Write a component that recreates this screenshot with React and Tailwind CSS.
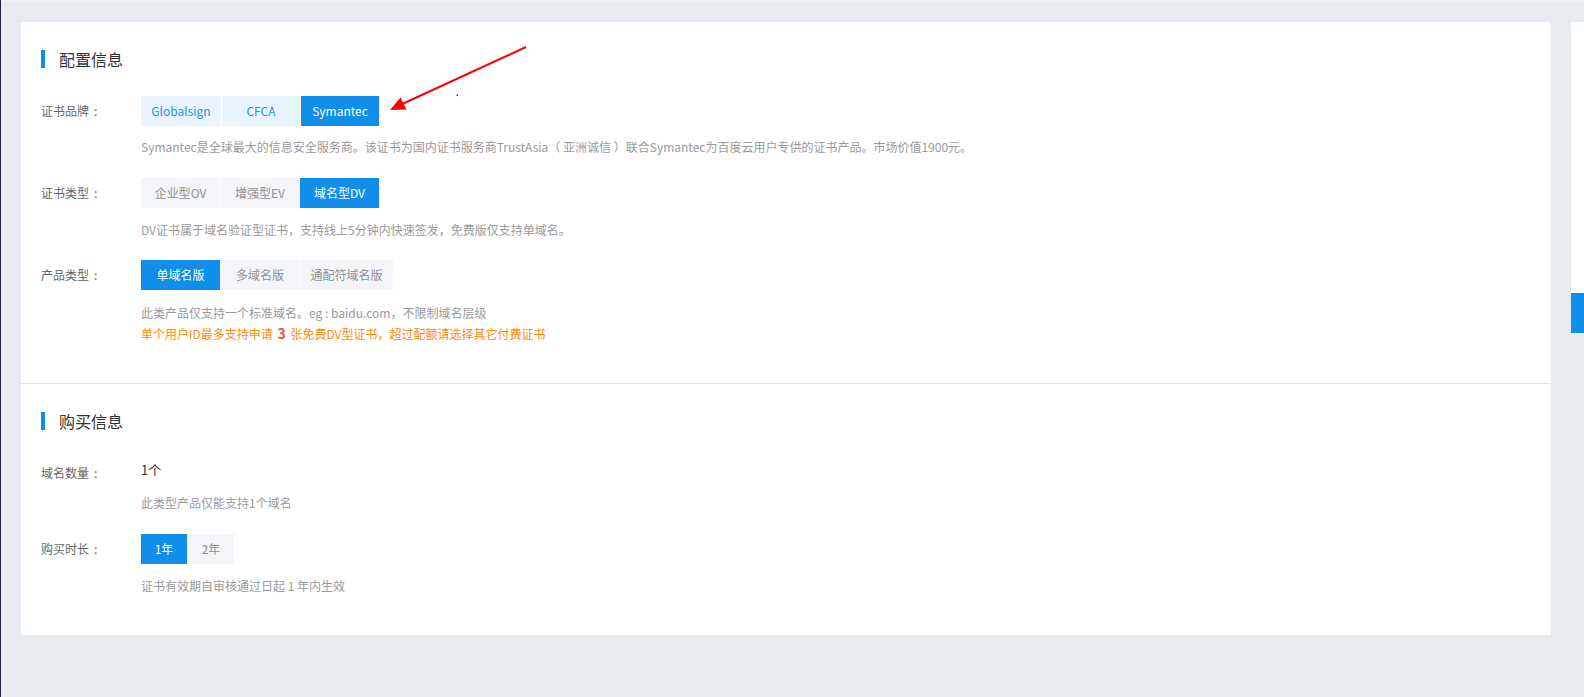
import React from "react";

function Btn({ children, active, tone = "gray", w }) {
  const base = "h-[30px] flex items-center justify-center text-[12px] shrink-0";
  let cls;
  if (active) cls = "bg-[#108ee9] text-white";
  else if (tone === "blue") cls = "bg-[#e9f5fe] text-[#2b8ee6]";
  else cls = "bg-[#f4f5f8] text-[#8f8f8f]";
  return (
    <div className={`${base} ${cls}`} style={{ width: w }}>
      {children}
    </div>
  );
}

function Heading({ children }) {
  return (
    <div className="flex items-center h-[18px]">
      <div className="w-[4px] h-[18px] bg-[#108ee9]" />
      <div className="ml-[14px] text-[16px] leading-[18px] text-[#333]">{children}</div>
    </div>
  );
}

function Label({ children }) {
  return (
    <div className="w-[100px] shrink-0 h-[30px] leading-[30px] text-[12px] text-[#666]">
      {children}
      <span className="ml-[5px]">:</span>
    </div>
  );
}

export default function App() {
  return (
    <div className="relative w-[1584px] h-[697px] bg-[#e7eaef] border-l border-[#1b2545] font-['Noto_Sans_CJK_SC',sans-serif] overflow-hidden">
      <div className="h-[2px] bg-[#eef0f3]" />
      <div className="flex pt-[20px] pl-[20px]">
        <div className="w-[1530px] h-[613px] bg-white">
          {/* Section 1 */}
          <div className="h-[362px] pt-[28px] pl-[20px] border-b border-[#e2e2e2]">
            <Heading>配置信息</Heading>
            <div className="mt-[28px] flex">
              <Label>证书品牌</Label>
              <div>
                <div className="flex gap-[1px]">
                  <Btn tone="blue" w={80}>Globalsign</Btn>
                  <Btn tone="blue" w={78}>CFCA</Btn>
                  <Btn active w={78}>Symantec</Btn>
                </div>
                <div className="mt-[11px] leading-[20px] text-[12px] text-[#9a9a9a]">
                  Symantec是全球最大的信息安全服务商。该证书为国内证书服务商TrustAsia（ 亚洲诚信 ）联合Symantec为百度云用户专供的证书产品。市场价值1900元。
                </div>
              </div>
            </div>
            <div className="mt-[21px] flex">
              <Label>证书类型</Label>
              <div>
                <div className="flex gap-[1px]">
                  <Btn w={79}>企业型OV</Btn>
                  <Btn w={78}>增强型EV</Btn>
                  <Btn active w={79}>域名型DV</Btn>
                </div>
                <div className="mt-[12px] leading-[20px] text-[12px] text-[#9a9a9a]">
                  DV证书属于域名验证型证书，支持线上5分钟内快速签发，免费版仅支持单域名。
                </div>
              </div>
            </div>
            <div className="mt-[20px] flex">
              <Label>产品类型</Label>
              <div>
                <div className="flex gap-[1px]">
                  <Btn active w={79}>单域名版</Btn>
                  <Btn w={78}>多域名版</Btn>
                  <Btn w={93}>通配符域名版</Btn>
                </div>
                <div className="mt-[12px] leading-[21px] text-[12px] text-[#9a9a9a]">
                  此类产品仅支持一个标准域名。eg : baidu.com，不限制域名层级
                </div>
                <div className="leading-[21px] text-[12px] text-[#ff8a0d]">
                  单个用户ID最多支持申请 <span className="mx-[2px] text-[#f2495c] font-bold text-[14px]">3</span> 张免费DV型证书，超过配额请选择其它付费证书
                </div>
              </div>
            </div>
          </div>
          {/* Section 2 */}
          <div className="pt-[28px] pl-[20px]">
            <Heading>购买信息</Heading>
            <div className="mt-[28px] flex">
              <Label>域名数量</Label>
              <div>
                <div className="leading-[24px] text-[13px] text-[#333]">1个</div>
                <div className="mt-[11px] leading-[20px] text-[12px] text-[#9a9a9a]">此类型产品仅能支持1个域名</div>
              </div>
            </div>
            <div className="mt-[21px] flex">
              <Label>购买时长</Label>
              <div>
                <div className="flex gap-[1px]">
                  <Btn active w={46}>1年</Btn>
                  <Btn w={46}>2年</Btn>
                </div>
                <div className="mt-[12px] leading-[20px] text-[12px] text-[#9a9a9a]">证书有效期自审核通过日起 1 年内生效</div>
              </div>
            </div>
          </div>
        </div>
        <div className="ml-[20px] w-[13px] flex flex-col">
          <div className="h-[271px] bg-white" />
          <div className="h-[40px] bg-[#108ee9]" />
        </div>
      </div>
      {/* annotation arrow */}
      <svg className="absolute left-0 top-0 pointer-events-none" width="1584" height="697">
        <line x1="525" y1="47" x2="399" y2="105" stroke="#ff0000" strokeWidth="2" />
        <polygon points="389,110 399.5,97.5 405.5,109.5" fill="#ff0000" />
        <rect x="455.5" y="94.5" width="1.5" height="1.5" fill="#ff0000" />
      </svg>
    </div>
  );
}
